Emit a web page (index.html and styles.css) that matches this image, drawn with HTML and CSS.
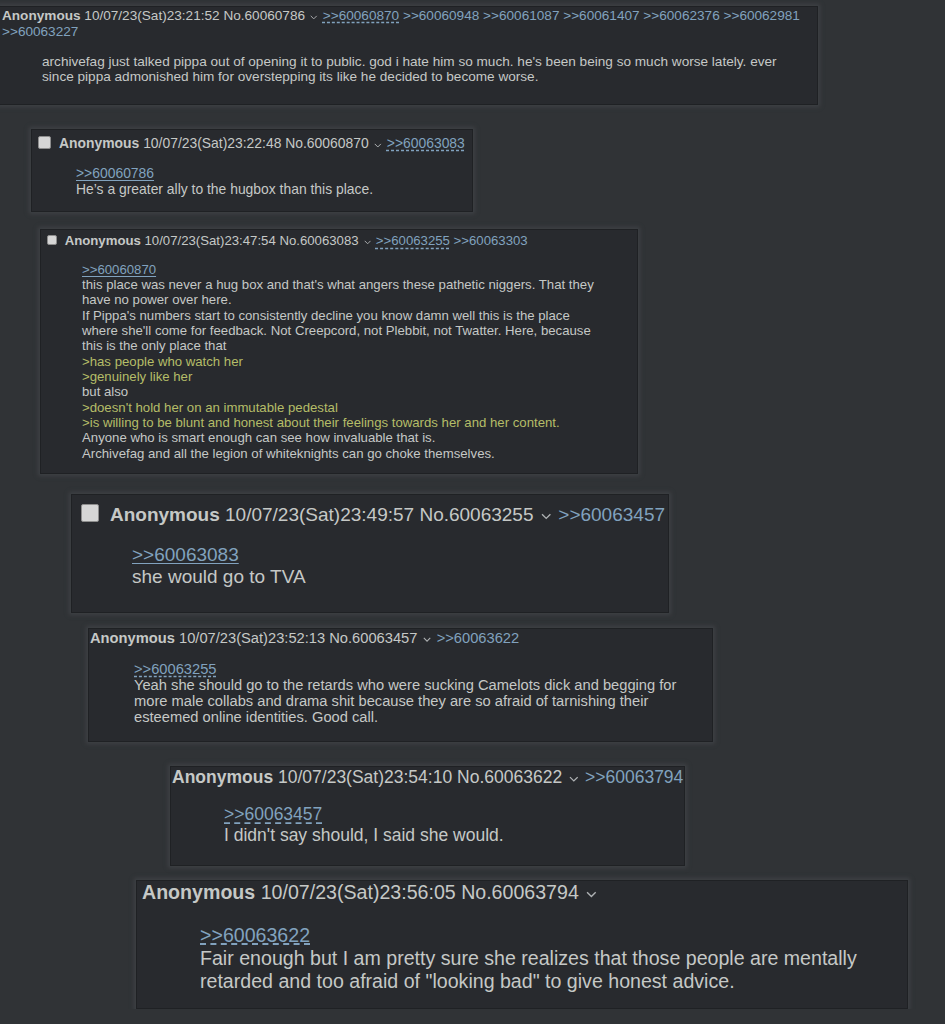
FILE: index.html
```html
<!DOCTYPE html>
<html lang="en">
<head>
  <meta charset="UTF-8" />
  <title>Thread replies</title>
  <link rel="stylesheet" href="styles.css">
</head>
<body>
  <div class="thread">

    <!-- 60060786 -->
    <div class="post p1">
      <div class="post-info">
        <span class="name">Anonymous</span>
        <span class="date">10/07/23(Sat)23:21:52</span>
        <span class="no">No.60060786</span>
        <svg class="menu" viewBox="0 0 10 6"><polyline points="1,1 5,5 9,1" /></svg>
        <a class="quote dashed">&gt;&gt;60060870</a>
        <a class="quote">&gt;&gt;60060948</a>
        <a class="quote">&gt;&gt;60061087</a>
        <a class="quote">&gt;&gt;60061407</a>
        <a class="quote">&gt;&gt;60062376</a>
        <a class="quote">&gt;&gt;60062981</a>
        <a class="quote">&gt;&gt;60063227</a>
      </div>
      <blockquote class="post-body">
        archivefag just talked pippa out of opening it to public. god i hate him so much. he's been being so much worse lately. ever since pippa admonished him for overstepping its like he decided to become worse.
      </blockquote>
    </div>

    <!-- 60060870 -->
    <div class="post p2">
      <div class="post-info">
        <span class="check"></span>
        <span class="name">Anonymous</span>
        <span class="date">10/07/23(Sat)23:22:48</span>
        <span class="no">No.60060870</span>
        <svg class="menu" viewBox="0 0 10 6"><polyline points="1,1 5,5 9,1" /></svg>
        <a class="quote dashed">&gt;&gt;60063083</a>
      </div>
      <blockquote class="post-body">
        <a class="quote solid">&gt;&gt;60060786</a><br>
        He’s a greater ally to the hugbox than this place.
      </blockquote>
    </div>

    <!-- 60063083 -->
    <div class="post p3">
      <div class="post-info">
        <span class="check"></span>
        <span class="name">Anonymous</span>
        <span class="date">10/07/23(Sat)23:47:54</span>
        <span class="no">No.60063083</span>
        <svg class="menu" viewBox="0 0 10 6"><polyline points="1,1 5,5 9,1" /></svg>
        <a class="quote dashed">&gt;&gt;60063255</a>
        <a class="quote">&gt;&gt;60063303</a>
      </div>
      <blockquote class="post-body">
        <a class="quote solid">&gt;&gt;60060870</a><br>
        this place was never a hug box and that's what angers these pathetic niggers. That they have no power over here.<br>
        If Pippa's numbers start to consistently decline you know damn well this is the place where she'll come for feedback. Not Creepcord, not Plebbit, not Twatter. Here, because this is the only place that<br>
        <span class="greentext">&gt;has people who watch her</span><br>
        <span class="greentext">&gt;genuinely like her</span><br>
        but also<br>
        <span class="greentext">&gt;doesn't hold her on an immutable pedestal</span><br>
        <span class="greentext">&gt;is willing to be blunt and honest about their feelings towards her and her content.</span><br>
        Anyone who is smart enough can see how invaluable that is.<br>
        Archivefag and all the legion of whiteknights can go choke themselves.
      </blockquote>
    </div>

    <!-- 60063255 -->
    <div class="post p4">
      <div class="post-info">
        <span class="check"></span>
        <span class="name">Anonymous</span>
        <span class="date">10/07/23(Sat)23:49:57</span>
        <span class="no">No.60063255</span>
        <svg class="menu" viewBox="0 0 10 6"><polyline points="1,1 5,5 9,1" /></svg>
        <a class="quote">&gt;&gt;60063457</a>
      </div>
      <blockquote class="post-body">
        <a class="quote solid">&gt;&gt;60063083</a><br>
        she would go to TVA
      </blockquote>
    </div>

    <!-- 60063457 -->
    <div class="post p5">
      <div class="post-info">
        <span class="name">Anonymous</span>
        <span class="date">10/07/23(Sat)23:52:13</span>
        <span class="no">No.60063457</span>
        <svg class="menu" viewBox="0 0 10 6"><polyline points="1,1 5,5 9,1" /></svg>
        <a class="quote">&gt;&gt;60063622</a>
      </div>
      <blockquote class="post-body">
        <a class="quote dashed">&gt;&gt;60063255</a><br>
        Yeah she should go to the retards who were sucking Camelots dick and begging for more male collabs and drama shit because they are so afraid of tarnishing their esteemed online identities. Good call.
      </blockquote>
    </div>

    <!-- 60063622 -->
    <div class="post p6">
      <div class="post-info">
        <span class="name">Anonymous</span>
        <span class="date">10/07/23(Sat)23:54:10</span>
        <span class="no">No.60063622</span>
        <svg class="menu" viewBox="0 0 10 6"><polyline points="1,1 5,5 9,1" /></svg>
        <a class="quote">&gt;&gt;60063794</a>
      </div>
      <blockquote class="post-body">
        <a class="quote dashed">&gt;&gt;60063457</a><br>
        I didn't say should, I said she would.
      </blockquote>
    </div>

    <!-- 60063794 -->
    <div class="post p7">
      <div class="post-info">
        <span class="name">Anonymous</span>
        <span class="date">10/07/23(Sat)23:56:05</span>
        <span class="no">No.60063794</span>
        <svg class="menu" viewBox="0 0 10 6"><polyline points="1,1 5,5 9,1" /></svg>
      </div>
      <blockquote class="post-body">
        <a class="quote dashed">&gt;&gt;60063622</a><br>
        Fair enough but I am pretty sure she realizes that those people are mentally retarded and too afraid of "looking bad" to give honest advice.
      </blockquote>
    </div>

  </div>
</body>
</html>
```

FILE: styles.css
```css
/* Base */
* {
  margin: 0;
  padding: 0;
  box-sizing: border-box;
}
body {
  font-family: 'Liberation Sans', Arial, sans-serif;
  background: #303336;
  color: #c5c8c6;
  overflow: hidden;
}
.thread {
  display: flex;
  flex-direction: column;
  align-items: flex-start;
}

/* Post box */
.post {
  --pr: 2.6em;
  background: #282a2e;
  border: 1px solid #1f2124;
  box-shadow: 0 0 4px 2px #3e4145;
  line-height: 1.16;
  padding: var(--pt) 0 0 var(--pl);
}
.post-info {
  white-space: nowrap;
}
.post-body {
  margin: var(--bm) 0 var(--bb) var(--ml);
  padding-right: var(--pr);
}

/* Post header */
.check {
  display: inline-block;
  width: var(--cb);
  height: var(--cb);
  background: #d6d6d6;
  border: 1px solid #8d8d8d;
  border-radius: 2px;
  vertical-align: var(--cv);
  margin-right: 0.3em;
}
.name {
  font-weight: bold;
  color: #c5c8c6;
}
.menu {
  width: 0.55em;
  height: 0.35em;
  margin: 0 0.1em;
  vertical-align: 0.05em;
  fill: none;
  stroke: #aeb1b3;
  stroke-width: 1.3;
}
.quote {
  color: #81a2be;
  text-decoration: none;
}
.quote.dashed {
  text-decoration: underline dashed;
  text-underline-offset: 2px;
}
.quote.solid {
  text-decoration: underline;
  text-underline-offset: 2px;
}
.greentext {
  color: #b5bd68;
}

/* Per-post sizing: every reply was captured at its own zoom */
.p1 {
  --pt: 1px; --pl: 2px; --bm: 14px; --bb: 19px; --ml: 40px;
  font-size: 13.6px;
  width: 819px;
  margin: 6px 0 0 -1px;
}
.p1 .post-info {
  white-space: normal;
}
.p2 {
  --pt: 5px; --pl: 6px; --bm: 14px; --bb: 14px; --ml: 38px; --cb: 13px; --cv: -1px;
  font-size: 13.9px;
  width: 442px;
  margin: 24px 0 0 31px;
}
.p3 {
  --pt: 3px; --pl: 6px; --bm: 13px; --bb: 12px; --ml: 35px; --cb: 10px; --cv: 0;
  font-size: 13.2px;
  width: 598px;
  margin: 17px 0 0 40px;
}
.p4 {
  --pt: 9px; --pl: 9px; --bm: 18px; --bb: 24px; --ml: 51px; --cb: 18px; --cv: -1px;
  font-size: 19px;
  width: 598px;
  margin: 20px 0 0 71px;
}
.p5 {
  --pt: 1px; --pl: 1px; --bm: 15px; --bb: 16px; --ml: 44px; --pr: 10px;
  font-size: 14.7px;
  line-height: 1.09;
  width: 625px;
  margin: 15px 0 0 88px;
}
.p6 {
  --pt: 0; --pl: 1px; --bm: 17px; --bb: 20px; --ml: 52px;
  font-size: 17.5px;
  width: 515px;
  margin: 24px 0 0 170px;
}
.p7 {
  --pt: 0; --pl: 5px; --bm: 20px; --bb: 15px; --ml: 58px; --pr: 20px;
  font-size: 19.6px;
  line-height: 1.18;
  width: 772px;
  margin: 14px 0 0 136px;
}
```
